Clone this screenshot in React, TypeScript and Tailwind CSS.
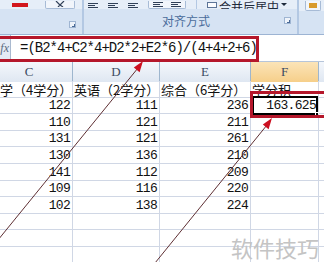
const cjk = { fontFamily: '"Noto Sans CJK SC", "Noto Sans", sans-serif' };
const mono = { fontFamily: '"Liberation Mono", "DejaVu Sans Mono", monospace' };

const labels = ["数学（4学分）", "英语（2学分）", "综合（6学分）", "学分积"];
const data = [
  ["122", "111", "236", "163.625"],
  ["110", "121", "211", ""],
  ["131", "121", "261", ""],
  ["130", "136", "210", ""],
  ["141", "112", "209", ""],
  ["109", "116", "220", ""],
  ["102", "138", "224", ""],
  ["", "", "", ""],
  ["", "", "", ""],
  ["", "", "", ""],
];

function Launcher() {
  return (
    <div className="flex h-[7px] w-[7px] items-end justify-end border border-[#9fb5d2] bg-[#eef3fa]">
      <div className="h-[3px] w-[3px] border-b border-r border-[#4a6a96]" />
    </div>
  );
}

function AlignIcon() {
  return (
    <div className="flex w-[10px] flex-col gap-[1px]">
      <div className="h-[1px] w-[10px] bg-[#2f3f57]" />
      <div className="h-[1px] w-[7px] bg-[#2f3f57]" />
      <div className="h-[1px] w-[10px] bg-[#2f3f57]" />
    </div>
  );
}

function Ribbon() {
  return (
    <div className="flex h-[35px] border-b border-[#9db4d3] bg-[#d6e3f3]">
      {/* font group */}
      <div className="flex w-[82px] flex-col">
        <div className="flex h-[9px] items-end gap-[5px] bg-[#e6eef8]">
          <div className="flex h-[9px] w-[40px] items-end justify-center pb-[2px]">
            <div className="h-[4px] w-[16px] bg-[#d2161c]" />
          </div>
          <div className="flex h-[8px] w-[30px] items-end justify-center rounded-b-[2px] border border-t-0 border-[#a7bbd6] bg-[#f1f5fb] pb-[1px]">
            <svg width="10" height="6" viewBox="0 0 10 6">
              <path d="M1 0 L5 4 M9 0 L3 6 M5 4 L8 6" stroke="#33425a" strokeWidth="1.2" fill="none" />
            </svg>
          </div>
        </div>
        <div className="flex flex-1 items-end justify-end pb-[6px] pr-[6px]">
          <Launcher />
        </div>
      </div>
      <div className="w-[2px] bg-[#b3c8e3]" />
      {/* alignment group */}
      <div className="flex w-[213px] flex-col">
        <div className="flex h-[9px] items-end gap-[10px] bg-[#e6eef8] pl-[4px]">
          <div className="pb-[1px]"><AlignIcon /></div>
          <div className="pb-[1px]"><AlignIcon /></div>
          <div className="pb-[1px]"><AlignIcon /></div>
          <div className="flex h-[8px] w-[38px] items-end justify-center gap-[8px] rounded-b-[2px] border border-t-0 border-[#a7bbd6] bg-[#f1f5fb] pb-[1px]">
            <AlignIcon />
            <AlignIcon />
          </div>
          <div className="h-[9px] w-[1px] bg-[#b3c8e3]" />
          <div className="flex h-[9px] items-end gap-[2px] overflow-hidden">
            <div className="mb-[1px] h-[6px] w-[10px] border border-[#5d7598] bg-[#fbfcfe]" />
            <span className="-mb-[4px] text-[12px] leading-[12px] text-[#1e2a3c]" style={cjk}>
              合并后居中
            </span>
            <svg width="6" height="6" viewBox="0 0 6 6" className="mb-[1px]">
              <path d="M0 1 L6 1 L3 4 Z" fill="#1e2a3c" />
            </svg>
          </div>
        </div>
        <div className="flex flex-1 items-center justify-between pb-[2px] pl-[78px] pr-[6px]">
          <span className="text-[12px] leading-[12px] text-[#4a6c9b]" style={cjk}>
            对齐方式
          </span>
          <Launcher />
        </div>
      </div>
      <div className="w-[2px] bg-[#b3c8e3]" />
      {/* number group */}
      <div className="flex flex-1 flex-col">
        <div className="flex h-[11px] items-end bg-[#e6eef8] pl-[6px]">
          <div className="flex h-[10px] w-[16px] items-center justify-center rounded-b-[2px] border border-t-0 border-[#a7bbd6] bg-[#f1f5fb]">
            <div className="h-[5px] w-[8px] bg-[#d89a2c]" />
          </div>
        </div>
      </div>
    </div>
  );
}

function FormulaBar() {
  return (
    <div className="flex h-[27px] border-b border-[#b6c5da] bg-[#e4ebf5]">
      <div className="flex w-[10px] items-center justify-end overflow-hidden pr-[1px]">
        <span className="text-[12px] italic text-[#5a6a80]" style={{ fontFamily: '"Liberation Serif", serif' }}>
          fx
        </span>
      </div>
      <div className="w-[1px] bg-[#a9b9cf]" />
      <div className="flex flex-1 items-center bg-white pl-[9px] pt-[1px]">
        <span className="text-[14px] tracking-[-1px] text-[#111]" style={mono}>
          =(B2*4+C2*4+D2*2+E2*6)/(4+4+2+6)
        </span>
      </div>
    </div>
  );
}

function Grid() {
  const cols = "grid grid-cols-[87px_87px_91px_68px_30px] ml-[-14px]";
  const heads = ["C", "D", "E", "F", ""];
  return (
    <div className="bg-white">
      <div className={`${cols} h-[19px] border-b border-[#9eb6ce]`}>
        {heads.map((c, i) => (
          <div
            key={i}
            className={`flex items-center justify-center border-r border-[#9eb6ce] text-[13px] text-[#3c4b62] ${
              c === "F" ? "bg-gradient-to-b from-[#fbe4b8] to-[#f6cf8a]" : "bg-gradient-to-b from-[#f4f7fc] to-[#dfe7f2]"
            }`}
            style={{ fontFamily: '"Liberation Serif", serif' }}
          >
            {c}
          </div>
        ))}
      </div>
      <div className={`${cols} h-[16.6px]`}>
        {labels.map((t) => (
          <div
            key={t}
            className="flex items-end whitespace-nowrap border-b border-r border-[#d0d7e5] pl-[1px] text-[13px] leading-[15px] text-[#111]"
            style={cjk}
          >
            {t}
          </div>
        ))}
        <div className="border-b border-[#d0d7e5]" />
      </div>
      {data.map((r, ri) => (
        <div key={ri} className={`${cols} h-[16.6px]`}>
          {r.map((v, ci) => (
            <div
              key={ci}
              className="relative flex items-end justify-end border-b border-r border-[#d0d7e5] pr-[2px] text-[13px] leading-[14px] tracking-[-0.7px] text-[#111]"
              style={mono}
            >
              {ri === 0 && ci === 3 && (
                <div className="absolute left-[1px] -top-[2px] h-[19px] w-[66px] border-2 border-black">
                  <div className="absolute -bottom-[3px] -right-[3px] h-[4px] w-[4px] border border-white bg-black" />
                </div>
              )}
              {v}
            </div>
          ))}
          <div className="border-b border-[#d0d7e5]" />
        </div>
      ))}
    </div>
  );
}

export default function App() {
  return (
    <div className="relative h-[262px] w-[324px] overflow-hidden bg-white">
      <Ribbon />
      <FormulaBar />
      <Grid />

      {/* annotations */}
      <div className="absolute left-[-3px] top-[36px] h-[26px] w-[262px] border-[3px] border-[#b5172b]" />
      <div className="absolute left-[250px] top-[91px] h-[27px] w-[78px] border-[3px] border-[#b5172b]" />
      <svg className="absolute left-0 top-0" width="324" height="262" viewBox="0 0 324 262">
        <line x1="-2" y1="240" x2="138" y2="68" stroke="#5e2f33" strokeWidth="1" />
        <polygon points="143,61 139.6,72.2 133.8,67.6" fill="#cc1020" />
        <line x1="155" y1="263" x2="267" y2="125" stroke="#5e2f33" strokeWidth="1" />
        <polygon points="272,118 268.6,129.2 262.8,124.6" fill="#cc1020" />
      </svg>
      <div
        className="absolute bottom-[2px] right-[5px] text-[22px] leading-[26px] text-[#c4c4c4]"
        style={cjk}
      >
        软件技巧
      </div>
    </div>
  );
}
